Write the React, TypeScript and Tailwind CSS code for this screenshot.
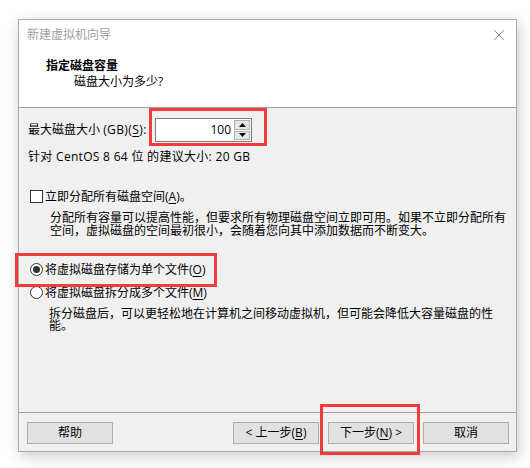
import React from 'react';

const Btn: React.FC<{ children: React.ReactNode }> = ({ children }) => (
  <div className="w-[86px] h-[22px] bg-[#e1e1e1] border border-[#adadad] flex items-center justify-center text-[12px] leading-none text-black">
    {children}
  </div>
);

const U: React.FC<{ children: React.ReactNode }> = ({ children }) => (
  <span className="underline underline-offset-[2px] decoration-1">{children}</span>
);

export default function App() {
  return (
    <div className="relative w-[530px] h-[468px] bg-white font-['Open_Sans','Noto_Sans_CJK_SC',sans-serif] text-[12px] text-black overflow-hidden">
      {/* dialog window */}
      <div className="absolute left-[18px] top-[19px] w-[499px] h-[433px] border border-[#aaaaaa] bg-white flex flex-col shadow-[2px_4px_14px_rgba(0,0,0,0.22)]">
        {/* title bar */}
        <div className="h-[30px] flex items-center justify-between pl-[8px] pr-[11px]">
          <span className="text-[12px] text-[#a0a0a0]">新建虚拟机向导</span>
          <svg width="12" height="12" viewBox="0 0 12 12">
            <path d="M1 1 L11 11 M11 1 L1 11" stroke="#8a8a8a" strokeWidth="1" />
          </svg>
        </div>

        {/* header */}
        <div className="h-[58px] pt-[8px] border-b border-[#a0a0a0] leading-[16px]">
          <div className="pl-[27px] font-bold">指定磁盘容量</div>
          <div className="pl-[55px]">磁盘大小为多少?</div>
        </div>

        {/* body */}
        <div className="flex-1 bg-[#f0f0f0] pl-[9px] flex flex-col">
          <div className="mt-[10px] h-[24px] flex items-center">
            <span className="w-[127px] whitespace-nowrap">
              最大磁盘大小 <span className="tracking-[0.4px]">(GB)(<U>S</U>):</span>
            </span>
            <div className="w-[97px] h-[24px] border border-[#7a7a7a] bg-white flex items-center">
              <span className="flex-1 text-right pr-[3px]">100</span>
              <div className="w-[16px] h-[20px] mr-[1px] flex flex-col gap-px">
                <div className="flex-1 bg-[#e6e6e6] border border-[#b0b0b0] flex items-center justify-center">
                  <svg width="7" height="4" viewBox="0 0 7 4"><path d="M0 4 L3.5 0 L7 4 Z" fill="#000" /></svg>
                </div>
                <div className="flex-1 bg-[#e6e6e6] border border-[#b0b0b0] flex items-center justify-center">
                  <svg width="7" height="4" viewBox="0 0 7 4"><path d="M0 0 L7 0 L3.5 4 Z" fill="#000" /></svg>
                </div>
              </div>
            </div>
          </div>

          <div className="mt-[8px] leading-[13px] whitespace-nowrap tracking-[0.3px]">
            针对 CentOS 8 64 位 的建议大小: 20 GB
          </div>

          <div className="mt-[27px] h-[13px] flex items-center pl-[2px]">
            <div className="w-[13px] h-[13px] border border-[#333333] bg-white" />
            <span className="ml-[2px] leading-[13px] whitespace-nowrap">
              立即分配所有磁盘空间(<U>A</U>)。
            </span>
          </div>

          <div className="mt-[8px] pl-[22px] leading-[13px] whitespace-nowrap">
            分配所有容量可以提高性能，但要求所有物理磁盘空间立即可用。如果不立即分配所有
            <br />
            空间，虚拟磁盘的空间最初很小，会随着您向其中添加数据而不断变大。
          </div>

          <div className="mt-[26px] h-[13px] flex items-center pl-[2px]">
            <div className="w-[13px] h-[13px] rounded-full border border-[#333333] bg-white flex items-center justify-center">
              <div className="w-[7px] h-[7px] rounded-full bg-[#333333]" />
            </div>
            <span className="ml-[2px] leading-[13px] whitespace-nowrap">
              将虚拟磁盘存储为单个文件(<U>O</U>)
            </span>
          </div>

          <div className="mt-[10px] h-[13px] flex items-center pl-[2px]">
            <div className="w-[13px] h-[13px] rounded-full border border-[#333333] bg-white" />
            <span className="ml-[2px] leading-[13px] whitespace-nowrap">
              将虚拟磁盘拆分成多个文件(<U>M</U>)
            </span>
          </div>

          <div className="mt-[9px] pl-[21px] leading-[12px] whitespace-nowrap">
            拆分磁盘后，可以更轻松地在计算机之间移动虚拟机，但可能会降低大容量磁盘的性
            <br />
            能。
          </div>
        </div>

        {/* footer */}
        <div className="h-[39px] bg-[#f0f0f0] border-t border-[#a0a0a0] flex items-start pt-[9px] pl-[8px] pr-[7px]">
          <Btn>帮助</Btn>
          <div className="flex-1" />
          <div className="flex gap-[9px]">
            <Btn>
              &lt; 上一步(<U>B</U>)
            </Btn>
            <Btn>
              下一步(<U>N</U>) &gt;
            </Btn>
            <Btn>取消</Btn>
          </div>
        </div>
      </div>

      {/* red annotation boxes */}
      <div className="absolute left-[149px] top-[108px] w-[118px] h-[38px] border-[3px] border-[#f23c3c]" />
      <div className="absolute left-[15px] top-[253px] w-[202px] h-[34px] border-[3px] border-[#f23c3c]" />
      <div className="absolute left-[320px] top-[404px] w-[100px] h-[51px] border-[3px] border-[#f23c3c]" />
    </div>
  );
}
